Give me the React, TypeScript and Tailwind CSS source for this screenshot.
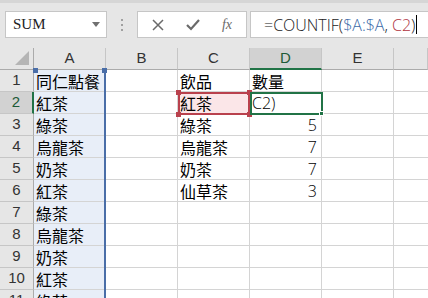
import React from "react";

const CJK = '"Noto Sans CJK TC", "Noto Sans CJK SC", sans-serif';

const colA = ["同仁點餐", "紅茶", "綠茶", "烏龍茶", "奶茶", "紅茶", "綠茶", "烏龍茶", "奶茶", "紅茶", "綠茶"];
const colC = ["飲品", "紅茶", "綠茶", "烏龍茶", "奶茶", "仙草茶", "", "", "", "", ""];
const colD = ["數量", "C2)", "5", "7", "7", "3", "", "", "", "", ""];

function Handle({ className }: { className: string }) {
  return <div className={"absolute w-[5px] h-[5px] " + className} />;
}

export default function App() {
  const letters = ["A", "B", "C", "D", "E", ""];
  return (
    <div className="w-[428px] h-[298px] overflow-hidden bg-white relative" style={{ fontFamily: CJK }}>
      {/* toolbar */}
      <div className="h-[48px] bg-[#e6e6e6] border-t-[3px] border-[#d6d6d6] flex items-start pt-[8px] pl-[5px] gap-0">
        <div className="w-[102px] h-[27px] bg-white border border-[#c6c6c6] flex items-center justify-between pl-[7px] pr-[6px]">
          <span className="text-[15px] text-[#222]" style={{ fontFamily: '"Liberation Serif", serif' }}>SUM</span>
          <svg width="8" height="5" viewBox="0 0 8 5"><path d="M0 0 L8 0 L4 5 Z" fill="#707070" /></svg>
        </div>
        <div className="w-[30px] h-[27px] flex flex-col items-center justify-center gap-[3px]">
          <div className="w-[2px] h-[2px] bg-[#a0a0a0]" />
          <div className="w-[2px] h-[2px] bg-[#a0a0a0]" />
          <div className="w-[2px] h-[2px] bg-[#a0a0a0]" />
        </div>
        <div className="w-[110px] h-[27px] bg-white border border-[#c6c6c6] flex items-center">
          <div className="w-[40px] flex justify-center">
            <svg width="12" height="12" viewBox="0 0 12 12"><path d="M1 1 L11 11 M11 1 L1 11" stroke="#6a6a6a" strokeWidth="1.5" /></svg>
          </div>
          <div className="w-[30px] flex justify-center">
            <svg width="14" height="12" viewBox="0 0 14 12"><path d="M1 6 L5 10 L13 1" stroke="#6a6a6a" strokeWidth="2.2" fill="none" /></svg>
          </div>
          <div className="w-[38px] flex justify-center">
            <span className="text-[14px] italic text-[#6a6a6a]" style={{ fontFamily: '"Liberation Serif", serif' }}>fx</span>
          </div>
        </div>
        <div className="ml-[3px] flex-1 h-[27px] bg-white border border-[#c6c6c6] border-r-0 flex items-center pl-[13px]">
          <span className="text-[16px] text-[#222] whitespace-pre" style={{ fontFamily: '"Open Sans", "Liberation Sans", sans-serif', fontWeight: 300 }}>
            =COUNTIF(<span className="text-[#3b6aa8]">$A:$A</span>, <span className="text-[#b0333e]">C2</span>)
          </span>
          <div className="w-[1px] h-[19px] bg-black ml-[1px]" />
        </div>
      </div>

      {/* sheet */}
      <div className="relative">
        <div className="grid grid-cols-[34px_72px_72px_72px_72px_72px_1fr] auto-rows-[22px]">
          {/* header row */}
          <div className="bg-[#e6e6e6] border-b border-r border-[#ababab] relative overflow-hidden">
            <svg className="absolute right-[4px] bottom-[4px]" width="14" height="14" viewBox="0 0 14 14"><path d="M14 0 L14 14 L0 14 Z" fill="#b5b5b5" /></svg>
          </div>
          {letters.map((l, i) => (
            <div
              key={l + i}
              className={
                "flex items-center justify-center text-[15px] border-r border-[#c6c6c6] " +
                (l === "D"
                  ? "bg-[#d2d2d2] border-b-2 border-b-[#217346] text-[#1d5a37]"
                  : "bg-[#e6e6e6] border-b border-b-[#ababab] text-[#333]")
              }
              style={{ fontFamily: '"Liberation Sans", sans-serif' }}
            >
              {l}
            </div>
          ))}
          {colA.map((a, r) => (
            <React.Fragment key={r}>
              <div
                className={
                  "flex items-center justify-center text-[15px] border-b border-[#c6c6c6] " +
                  (r === 1
                    ? "bg-[#d2d2d2] border-r-2 border-r-[#217346] text-[#1d5a37]"
                    : "bg-[#e6e6e6] border-r border-r-[#ababab] text-[#333]")
                }
                style={{ fontFamily: '"Liberation Sans", sans-serif' }}
              >
                {r + 1}
              </div>
              <div className="bg-[#e8eef8] border-b border-[#d4d4d4] flex items-center pl-[2px] pt-[1px] text-[16px] text-black leading-none">
                {a}
              </div>
              <div className="border-b border-r border-[#d4d4d4]" />
              <div className={"border-b border-r border-[#d4d4d4] flex items-center pl-[2px] pt-[1px] text-[16px] text-black leading-none " + (r === 1 ? "bg-[#fbe6e8]" : "")}>
                {colC[r]}
              </div>
              <div
                className={
                  "border-b border-r border-[#d4d4d4] flex items-center pt-[1px] text-[16px] text-black leading-none " +
                  (r <= 1 ? "pl-[2px]" : "justify-end pr-[4px]")
                }
                style={r >= 1 ? { fontFamily: '"Open Sans", "Liberation Sans", sans-serif', fontWeight: 300 } : undefined}
              >
                {colD[r]}
              </div>
              <div className="border-b border-r border-[#d4d4d4]" />
              <div className="border-b border-[#d4d4d4]" />
            </React.Fragment>
          ))}
        </div>

        {/* column A range (blue) */}
        <div className="absolute left-[34px] top-[22px] w-[72px] h-[260px] border-r-2 border-[#4a6ea8] pointer-events-none" />
        <Handle className="left-[33px] top-[20px] bg-[#4a6ea8]" />
        <Handle className="left-[102px] top-[20px] bg-[#4a6ea8]" />

        {/* C2 range (red) */}
        <div className="absolute left-[178px] top-[44px] w-[72px] h-[23px] border-2 border-[#b9414d]" />
        <Handle className="left-[176px] top-[42px] bg-[#b9414d]" />
        <Handle className="left-[247px] top-[42px] bg-[#b9414d]" />
        <Handle className="left-[176px] top-[64px] bg-[#b9414d]" />
        <Handle className="left-[247px] top-[64px] bg-[#b9414d]" />

        {/* D2 active (green) */}
        <div className="absolute left-[250px] top-[44px] w-[73px] h-[23px] border-2 border-[#217346]" />
        <Handle className="left-[319px] top-[63px] bg-[#217346] border border-white" />
      </div>
    </div>
  );
}
